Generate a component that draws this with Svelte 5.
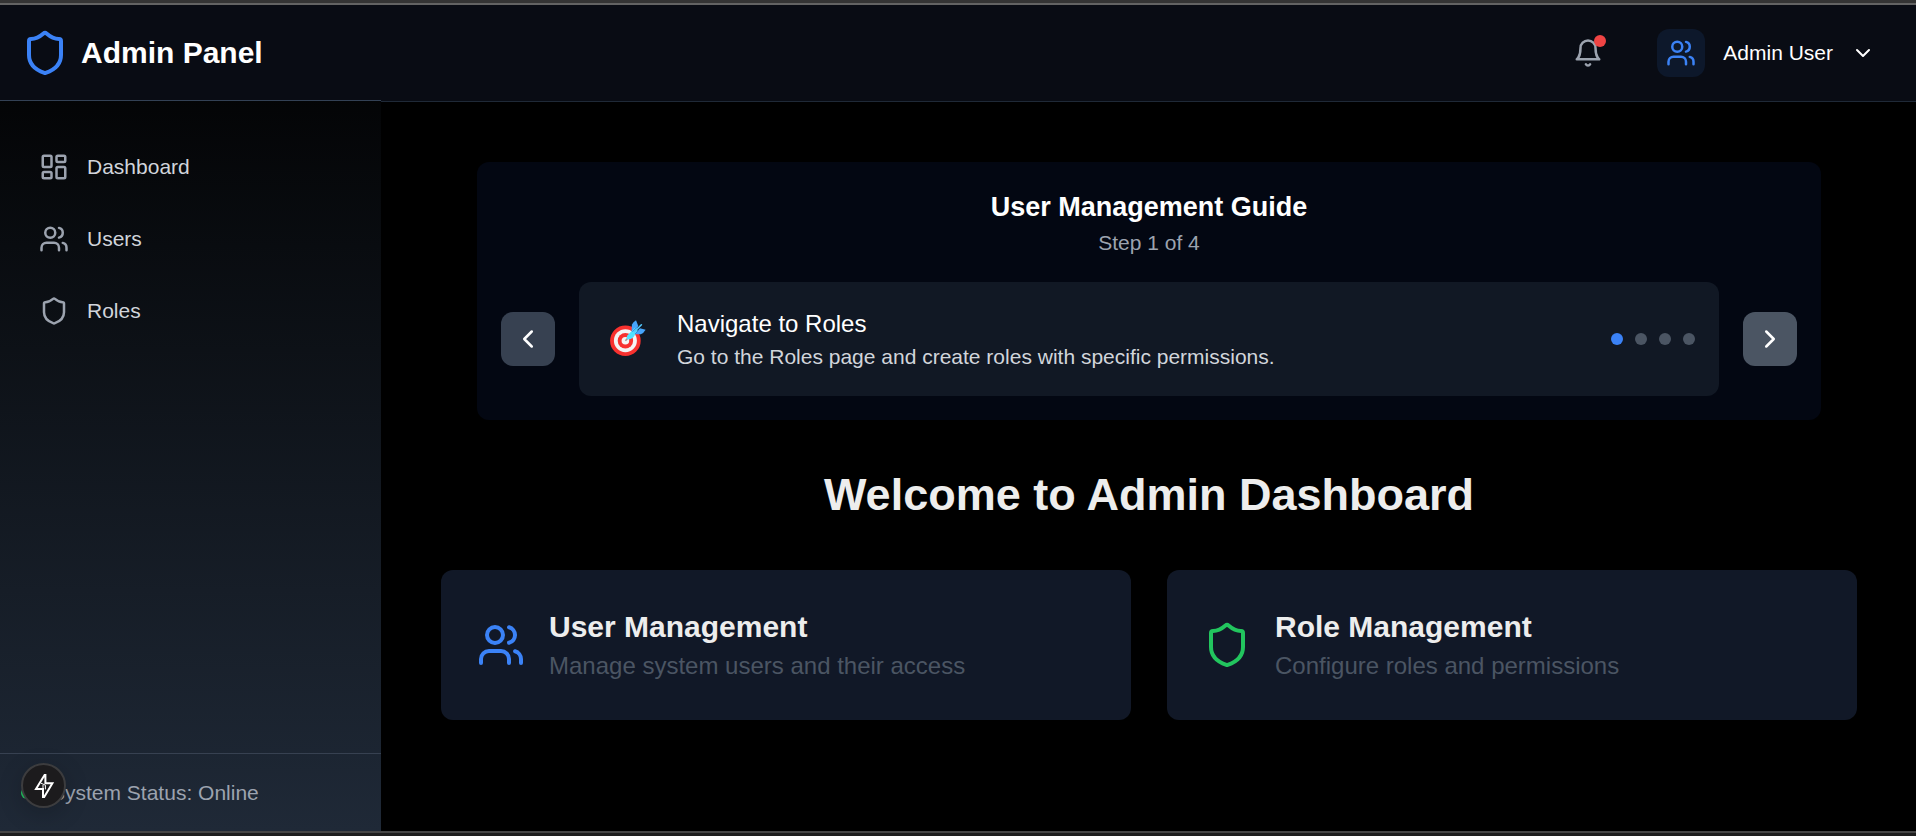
<script>
  const nav = [
    { label: 'Dashboard', icon: 'grid' },
    { label: 'Users', icon: 'users' },
    { label: 'Roles', icon: 'shield' },
  ];
  const steps = [0, 1, 2, 3];
  const cards = [
    { title: 'User Management', text: 'Manage system users and their access', icon: 'users', tone: 'blue' },
    { title: 'Role Management', text: 'Configure roles and permissions', icon: 'shield', tone: 'green' },
  ];
</script>

{#snippet icon(name, size)}
  <svg class="icon" width={size} height={size} viewBox="0 0 24 24" aria-hidden="true">
    {#if name === 'shield'}
      <path d="M20 13c0 5-3.5 7.5-7.66 8.95a1 1 0 0 1-.67-.01C7.5 20.5 4 18 4 13V6a1 1 0 0 1 1-1c2 0 4.5-1.2 6.24-2.72a1.17 1.17 0 0 1 1.52 0C14.51 3.81 17 5 19 5a1 1 0 0 1 1 1z" />
    {:else if name === 'users'}
      <path d="M16 21v-2a4 4 0 0 0-4-4H6a4 4 0 0 0-4 4v2" />
      <circle cx="9" cy="7" r="4" />
      <path d="M22 21v-2a4 4 0 0 0-3-3.87" />
      <path d="M16 3.13a4 4 0 0 1 0 7.75" />
    {:else if name === 'grid'}
      <rect width="7" height="9" x="3" y="3" rx="1" />
      <rect width="7" height="5" x="14" y="3" rx="1" />
      <rect width="7" height="9" x="14" y="12" rx="1" />
      <rect width="7" height="5" x="3" y="16" rx="1" />
    {:else if name === 'bell'}
      <path d="M6 8a6 6 0 0 1 12 0c0 7 3 9 3 9H3s3-2 3-9" />
      <path d="M10.3 21a1.94 1.94 0 0 0 3.4 0" />
    {:else if name === 'down'}
      <path d="m6 9 6 6 6-6" />
    {:else if name === 'left'}
      <path d="m15 18-6-6 6-6" />
    {:else if name === 'right'}
      <path d="m9 18 6-6-6-6" />
    {/if}
  </svg>
{/snippet}

<div class="page">
  <aside>
    <div class="brand">
      {@render icon('shield', 48)}
      <span>Admin Panel</span>
    </div>
    <nav>
      {#each nav as item}
        <a href="#{item.label}">
          {@render icon(item.icon, 30)}
          <span>{item.label}</span>
        </a>
      {/each}
    </nav>
    <div class="status">
      <span class="online"></span>
      <span>System Status: Online</span>
    </div>
  </aside>

  <div class="content">
    <header>
      <button class="bell" aria-label="Notifications">
        {@render icon('bell', 30)}
        <span class="alert"></span>
      </button>
      <button class="account">
        <span class="avatar">{@render icon('users', 30)}</span>
        <span>Admin User</span>
        {@render icon('down', 24)}
      </button>
    </header>

    <main>
      <section class="guide">
        <h2>User Management Guide</h2>
        <p class="count">Step 1 of 4</p>
        <div class="stepper">
          <button class="arrow" aria-label="Previous step">{@render icon('left', 30)}</button>
          <div class="step">
            <svg width="50" height="48" viewBox="0 0 50 48" aria-hidden="true">
              <circle cx="22.4" cy="25.7" r="15.3" fill="#f8312f" />
              <circle cx="22.4" cy="25.7" r="11.5" fill="#f4f4f4" />
              <circle cx="22.4" cy="25.7" r="7.7" fill="#f8312f" />
              <circle cx="22.4" cy="25.7" r="3.8" fill="#f4f4f4" />
              <path d="M22.4 25.7l3.4-3.6" stroke="#9b9b9b" stroke-width="1.6" />
              <path d="M28.5 16.5 29 9.6Q30 7 33 5.3L35.2 10.8 33.5 15z" fill="#46a4fb" />
              <path d="M31 19.2 37 13.2 42.6 14.8Q40.8 18.2 37.8 19.2z" fill="#46a4fb" />
              <path d="M24.3 20.4 32.2 12.6 34.7 15.2 30.4 22.3Q27.4 25.4 24 24Q23.4 22 24.3 20.4z" fill="#50e2ff" />
              <path d="M31.4 16.8 38.4 9.8" stroke="#50c8ff" stroke-width="1.6" stroke-linecap="round" />
              <path d="M29.4 16.8 33.6 12.6M32 19 36 15" stroke="#3489dc" stroke-width="1" />
            </svg>
            <div class="text">
              <h3>Navigate to Roles</h3>
              <p>Go to the Roles page and create roles with specific permissions.</p>
            </div>
            <div class="dots">
              {#each steps as step}
                <span class:active={step === 0}></span>
              {/each}
            </div>
          </div>
          <button class="arrow next" aria-label="Next step">{@render icon('right', 30)}</button>
        </div>
      </section>

      <h1>Welcome to Admin Dashboard</h1>

      <div class="cards">
        {#each cards as card}
          <a class="card {card.tone}" href="#{card.icon}">
            {@render icon(card.icon, 48)}
            <div>
              <h2>{card.title}</h2>
              <p>{card.text}</p>
            </div>
          </a>
        {/each}
      </div>
    </main>
  </div>

  <button class="devtools" aria-label="Developer tools">
    <svg width="24" height="26" viewBox="0 0 24 26" aria-hidden="true">
      <path d="M12.6 2 4 16H11V24H12.2L20.4 10.2H13.4V2z" />
      <path d="M9 10.2 13.4 12.2V16.4M11 16V12" class="notch" />
    </svg>
  </button>
</div>

<style>
  :global(body) {
    margin: 0;
    background: #000;
  }
  :global(*) {
    box-sizing: border-box;
  }
  .page {
    position: relative;
    display: flex;
    min-height: 100vh;
    padding: 5px 0;
    background:
      linear-gradient(#343434 3px, #636363 3px) top / 100% 5px no-repeat,
      linear-gradient(#464646 2px, #1e1e1e 2px) bottom / 100% 5px no-repeat,
      #000;
    color: #ededed;
    font-family: "Liberation Sans", Arial, Helvetica, sans-serif;
    font-size: 21px;
    line-height: 30px;
  }
  h1,
  h2,
  h3,
  p {
    margin: 0;
  }
  a {
    color: inherit;
    text-decoration: none;
  }
  button {
    padding: 0;
    border: 0;
    background: none;
    color: inherit;
    font: inherit;
    cursor: pointer;
  }
  svg {
    display: block;
    flex: none;
  }
  .icon {
    fill: none;
    stroke: currentColor;
    stroke-width: 2;
    stroke-linecap: round;
    stroke-linejoin: round;
  }
  aside {
    display: flex;
    flex: none;
    flex-direction: column;
    width: 381px;
    background: linear-gradient(#000, #1f2937);
  }
  .brand {
    display: flex;
    align-items: center;
    gap: 12px;
    height: 96px;
    padding: 0 21px;
    border-bottom: 1px solid #334155;
    background: #090c14;
    color: #fff;
    font-size: 30px;
    font-weight: 700;
  }
  .brand .icon {
    color: #3b82f6;
  }
  nav {
    display: flex;
    flex: 1;
    flex-direction: column;
    gap: 12px;
    padding: 36px 21px;
  }
  nav a {
    display: flex;
    align-items: center;
    gap: 18px;
    padding: 15px 18px;
    color: #d1d5db;
  }
  nav .icon {
    color: #9ca3af;
  }
  .status {
    display: flex;
    align-items: center;
    gap: 18px;
    padding: 24px 21px 23px;
    border-top: 1px solid #374151;
    color: #9ca3af;
  }
  .online {
    width: 12px;
    height: 12px;
    border-radius: 50%;
    background: #22c55e;
  }
  .content {
    flex: 1;
    min-width: 0;
  }
  header {
    display: flex;
    align-items: center;
    justify-content: flex-end;
    gap: 54px;
    height: 97px;
    padding: 0 41px;
    border-bottom: 1px solid #1f2937;
    background: #090c14;
  }
  .bell {
    position: relative;
    color: #9ca3af;
  }
  .alert {
    position: absolute;
    top: -3px;
    right: -3px;
    width: 12px;
    height: 12px;
    border-radius: 50%;
    background: #ef4444;
  }
  .account {
    display: flex;
    align-items: center;
    gap: 18px;
    color: #fff;
  }
  .avatar {
    padding: 9px;
    border-radius: 12px;
    background: #0d182b;
    color: #3b82f6;
  }
  main {
    padding: 60px 59px 60px 60px;
  }
  .guide {
    max-width: 1344px;
    margin: 0 auto;
    padding: 24px;
    border-radius: 12px;
    background: #030712;
    text-align: center;
  }
  .guide h2 {
    color: #fff;
    font-size: 27px;
    line-height: 42px;
  }
  .count {
    color: #9ca3af;
  }
  .stepper {
    display: flex;
    align-items: center;
    gap: 24px;
    margin-top: 24px;
  }
  .arrow {
    display: grid;
    flex: none;
    place-items: center;
    width: 54px;
    height: 54px;
    border-radius: 12px;
    background: #374151;
    color: #fff;
  }
  .next {
    background: #4b5563;
  }
  .step {
    display: flex;
    flex: 1;
    align-items: center;
    gap: 24px;
    padding: 24px;
    border-radius: 12px;
    background: #111824;
    text-align: left;
  }
  .text {
    flex: 1;
  }
  h3 {
    color: #fff;
    font-size: 24px;
    font-weight: 500;
    line-height: 36px;
  }
  .text p {
    color: #d1d5db;
  }
  .dots {
    display: flex;
    gap: 12px;
  }
  .dots span {
    width: 12px;
    height: 12px;
    border-radius: 50%;
    background: #4b5563;
  }
  .dots .active {
    background: #3b82f6;
  }
  h1 {
    margin: 48px 0;
    font-size: 45px;
    line-height: 54px;
    text-align: center;
  }
  .cards {
    display: grid;
    grid-template-columns: 1fr 1fr;
    gap: 36px;
  }
  .card {
    display: flex;
    align-items: center;
    gap: 24px;
    padding: 36px;
    border-radius: 12px;
    background: #111827;
  }
  .blue .icon {
    color: #3b82f6;
  }
  .green .icon {
    color: #22c55e;
  }
  .card h2 {
    font-size: 30px;
    line-height: 42px;
  }
  .card p {
    color: #4b5563;
    font-size: 24px;
    line-height: 36px;
  }
  .devtools {
    position: absolute;
    bottom: 28px;
    left: 21px;
    display: grid;
    place-items: center;
    width: 45px;
    height: 45px;
    border: 2px solid #3c3c3e;
    border-radius: 50%;
    background: #1c1b1d;
    box-shadow: 0 6px 24px rgb(0 0 0 / 20%);
  }
  .devtools path {
    fill: none;
    stroke: #fff;
    stroke-width: 2;
  }
  .devtools .notch {
    stroke-width: 1;
  }
</style>
